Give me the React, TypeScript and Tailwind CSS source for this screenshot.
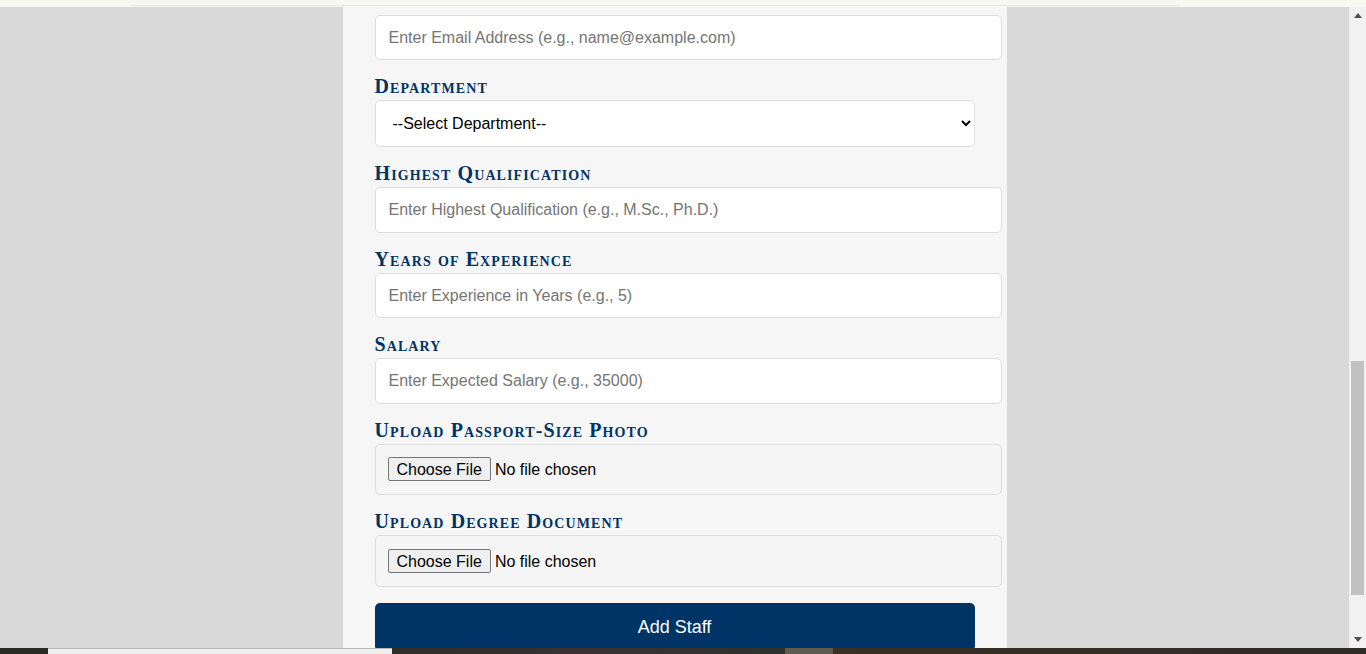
import React from 'react';

const labelCls =
  "block h-[21px] mb-[3px] text-[20px] leading-[21px] font-bold text-[#003366] [font-variant:small-caps] tracking-[1.1px] [font-family:'Liberation_Serif',serif]";

const inputCls =
  "block w-[627px] rounded-[5px] border border-[#dddddd] bg-white px-[13px] text-[16px] text-black placeholder:text-[#757575] outline-none [font-family:'Liberation_Sans',Arial,sans-serif]";

function Field({ label, placeholder }: { label: string; placeholder: string }) {
  return (
    <div className="mb-4">
      <label className={labelCls}>{label}</label>
      <input type="text" placeholder={placeholder} className={`${inputCls} h-[46px]`} />
    </div>
  );
}

function FileField({ label, h }: { label: string; h: string }) {
  return (
    <div className="mb-4">
      <label className={labelCls}>{label}</label>
      <div
        className={`flex w-[627px] items-center rounded-[5px] border border-[#dddddd] bg-[#f5f5f5] px-3 ${h}`}
      >
        <input
          type="file"
          className="text-[16px] text-black [font-family:'Liberation_Sans',Arial,sans-serif] file:mr-[4px] file:h-[24px] file:rounded-[2px] file:border file:border-solid file:border-[#767676] file:bg-[#efefef] file:px-[8px] file:text-[16px] file:text-black"
        />
      </div>
    </div>
  );
}

export default function App() {
  return (
    <div className="flex h-[654px] w-[1366px] flex-col overflow-hidden bg-[#d9d9d9]">
      {/* top strip */}
      <div className="relative h-[7px] shrink-0 bg-[#f7f9ef]">
        <div className="absolute bottom-[1px] left-[130px] h-[1px] w-[1050px] bg-[#e2e9d8]" />
      </div>

      <div className="flex min-h-0 flex-1">
        <div className="flex min-w-0 flex-1 justify-center overflow-hidden">
          <div className="w-[664px] shrink-0 bg-[#f6f6f6] pl-8 pt-[8px]">
            <div className="mb-4">
              <input
                type="email"
                placeholder="Enter Email Address (e.g., name@example.com)"
                className={`${inputCls} h-[45px]`}
              />
            </div>

            <div className="mb-4">
              <label className={labelCls}>Department</label>
              <select className="block h-[47px] w-[600px] rounded-[5px] border border-[#dddddd] bg-white pl-[13px] pr-2 text-[16px] text-black outline-none [font-family:'Liberation_Sans',Arial,sans-serif]">
                <option>--Select Department--</option>
                <option>Computer Science</option>
                <option>Mathematics</option>
                <option>Physics</option>
              </select>
            </div>

            <Field
              label="Highest Qualification"
              placeholder="Enter Highest Qualification (e.g., M.Sc., Ph.D.)"
            />
            <div className="mb-4">
              <label className={labelCls}>Years of Experience</label>
              <input
                type="text"
                placeholder="Enter Experience in Years (e.g., 5)"
                className={`${inputCls} h-[45px]`}
              />
            </div>
            <Field label="Salary" placeholder="Enter Expected Salary (e.g., 35000)" />

            <FileField label="Upload Passport-Size Photo" h="h-[51px]" />
            <FileField label="Upload Degree Document" h="h-[52px]" />

            <button className="h-[48px] w-[600px] rounded-[5px] bg-[#003366] text-[18px] text-white [font-family:'Liberation_Sans',Arial,sans-serif]">
              Add Staff
            </button>
          </div>
        </div>

        {/* scrollbar */}
        <div className="flex w-[17px] shrink-0 flex-col items-center bg-[#f1f1f1]">
          <div className="flex h-[17px] w-full items-center justify-center">
            <svg width="8" height="5" viewBox="0 0 8 5">
              <path d="M0 5 L4 0 L8 5 Z" fill="#505050" />
            </svg>
          </div>
          <div className="h-[337px]" />
          <div className="h-[234px] w-[13px] bg-[#c1c1c1]" />
          <div className="flex-1" />
          <div className="flex h-[17px] w-full items-center justify-center">
            <svg width="8" height="5" viewBox="0 0 8 5">
              <path d="M0 0 L4 5 L8 0 Z" fill="#505050" />
            </svg>
          </div>
        </div>
      </div>

      {/* bottom strip */}
      <div className="flex h-[6px] shrink-0">
        <div className="w-[48px] bg-[#2a2b23]" />
        <div className="w-[344px] border-t border-[#b8b8b8] bg-[#f0f0f0]" />
        <div className="w-[393px] bg-gradient-to-r from-[#2f2e26] via-[#3a3030] to-[#2f332c]" />
        <div className="w-[48px] bg-[#5f5a50]" />
        <div className="flex-1 bg-gradient-to-r from-[#3a3024] to-[#2d2b25]" />
      </div>
    </div>
  );
}
